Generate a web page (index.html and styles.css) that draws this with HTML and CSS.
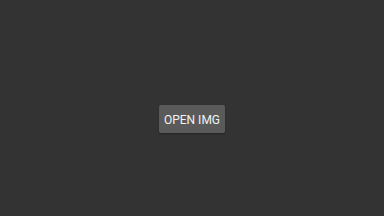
FILE: index.html
```html
<!DOCTYPE html>
<html lang="en">
<head>
    <meta charset="UTF-8">
    <meta name="viewport" content="width=device-width, initial-scale=1.0">
    <title>Open Image</title>
    <link rel="stylesheet" href="styles.css">
</head>
<body>
    <div class="viewer">
        <button class="open-btn" type="button">Open img</button>
    </div>
</body>
</html>
```

FILE: styles.css
```css
html, body {
    margin: 0;
    height: 100%;
}

body {
    background-color: #333333;
    font-family: Roboto, "Liberation Sans", sans-serif;
}

.viewer {
    height: 100%;
    box-sizing: border-box;
    padding-top: 22px;
    display: flex;
    align-items: center;
    justify-content: center;
}

.open-btn {
    width: 66px;
    height: 28px;
    padding: 2px 0 0;
    border: none;
    border-radius: 2px;
    background-color: #5a5a5a;
    color: #f2f2f2;
    font-family: inherit;
    font-size: 12px;
    font-weight: 400;
    text-transform: uppercase;
    box-shadow: 0 1px 2px rgba(0, 0, 0, 0.3);
    cursor: pointer;
}
```
